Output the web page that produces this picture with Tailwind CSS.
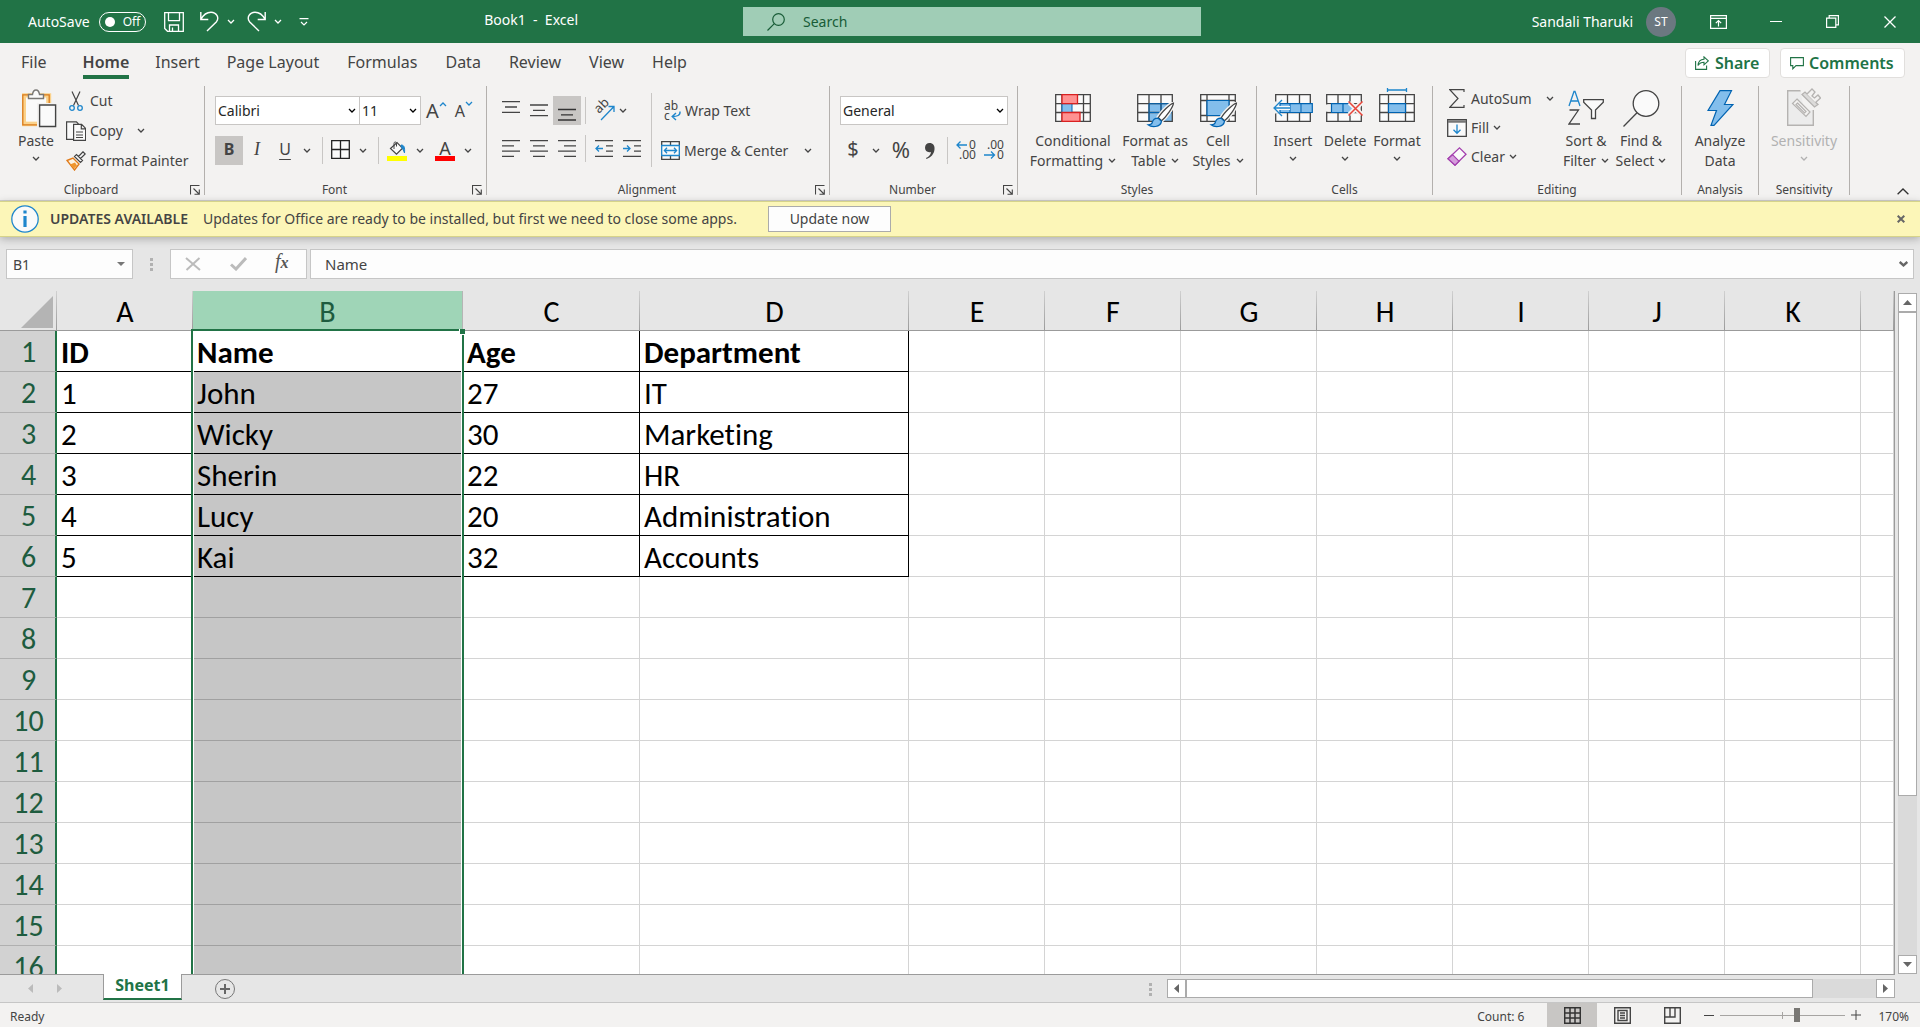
<!DOCTYPE html>
<html lang="en">
<head>
<meta charset="utf-8">
<title>Book1 - Excel</title>
<script src="https://cdn.jsdelivr.net/npm/@tailwindcss/browser@4"></script>
</head>
<body class="flex h-screen flex-col overflow-hidden bg-[#e6e6e6] font-['Noto_Sans','Open_Sans',sans-serif] text-sm text-[#444444]">

<svg class="hidden">
  <symbol id="chev" viewBox="0 0 8 6"><path d="M1 1l3 3 3-3" fill="none" stroke="currentColor" stroke-width="1.3"/></symbol>
  <symbol id="launch" viewBox="0 0 10 10"><path d="M.5 9.500V.5h9M3.500 3.500l5.500 5.500M9.300 4.500v4.800H4.500" fill="none" stroke="currentColor" stroke-width="1.100"/></symbol>
  <symbol id="brush" viewBox="0 0 28 26"><path d="M26.500 1c-3 .5-12 9.500-14.500 14l3 3c4.500-3.500 11.500-13.500 11.500-17z" fill="#fff" stroke="#f3f2f1" stroke-width="4"/><path d="M26.500 1c-3 .5-12 9.500-14.500 14l3 3c4.500-3.500 11.500-13.500 11.500-17z" fill="#fff" stroke="#444" stroke-width="1.200"/><path d="M11.500 15.500c-4 0-5 2-5.500 4.500-.5 1.500-2 2-4 2 3 2.500 12 3 13-3.500z" fill="#83beec" stroke="#0063b1" stroke-width="1.200"/></symbol>
</svg>

<header class="flex h-[43px] shrink-0 items-center bg-[#217346] text-white">
  <div class="flex min-w-0 flex-1 items-center">
    <label for="autosave" class="ml-7">AutoSave</label>
    <button id="autosave" class="ml-[9px] flex h-5 w-[47px] items-center gap-2 rounded-full border border-white pl-[5px] text-xs"><span class="size-[10px] rounded-full bg-white"></span>Off</button>
    <button aria-label="Save" class="ml-[18px]"><svg class="size-5" viewBox="0 0 20 20" fill="none" stroke="#fff" stroke-width="1.3"><path d="M.7.700h18.600v18.600H3.500L.7 16.500zM4.500.700v8h11v-8M5.500 19v-6h9v6M8.500 19v-3.500"/></svg></button>
    <button aria-label="Undo" class="ml-4"><svg class="h-[21px] w-[19px]" viewBox="0 0 19 21" fill="none" stroke="#fff" stroke-width="1.400"><path d="M.8 1v7.500h7.500M1 8.300C3.500 3.500 7 1.200 11 1.200c5.500 0 8.500 5.500 5.500 9.500L7 20"/></svg></button>
    <button aria-label="Undo options" class="ml-2"><svg class="h-[6px] w-2"><use href="#chev"/></svg></button>
    <button aria-label="Redo" class="ml-3"><svg class="h-[21px] w-[19px]" viewBox="0 0 19 21" fill="none" stroke="#fff" stroke-width="1.400"><path d="M18.200 1v7.500h-7.500M18 8.300C15.500 3.500 12 1.200 8 1.200c-5.500 0-8.500 5.500-5.500 9.500L12 20"/></svg></button>
    <button aria-label="Redo options" class="ml-2"><svg class="h-[6px] w-2"><use href="#chev"/></svg></button>
    <button aria-label="Customize toolbar" class="ml-[17px]"><svg class="h-2 w-[10px]" viewBox="0 0 10 8" fill="none" stroke="#fff" stroke-width="1.200"><path d="M.5.600h9M2 4l3 3 3-3"/></svg></button>
    <h1 class="mr-[141px] ml-auto pb-1 whitespace-pre">Book1  -  Excel</h1>
  </div>
  <label class="ml-6 flex h-[29px] w-[458px] items-center bg-[#a0cdb6] pl-6 text-[#185c37]">
    <svg class="size-[18px]" viewBox="0 0 18 18" fill="none" stroke="#185c37" stroke-width="1.200"><circle cx="11.500" cy="6.500" r="5.800"/><path d="M7.300 10.700L.5 17.500"/></svg>
    <input aria-label="Search" placeholder="Search" class="ml-[18px] w-80 bg-transparent outline-none placeholder:text-[#185c37]">
  </label>
  <div class="flex flex-1 items-center justify-end">
    <span>Sandali Tharuki</span>
    <button aria-label="Account" class="ml-[13px] flex size-[30px] items-center justify-center rounded-full bg-[#6b7880] text-xs">ST</button>
    <button aria-label="Ribbon display options" class="ml-[34px]"><svg class="h-[14px] w-[17px]" viewBox="0 0 17 14" fill="none" stroke="#fff" stroke-width="1.200"><path d="M.6.600h15.800v12.800H.6zM.6 3.400h15.800M8.500 11.500V5.500M5.800 8.200l2.700-2.700 2.700 2.700"/></svg></button>
    <button aria-label="Minimize" class="ml-[43px] h-[14px] w-3"><span class="block h-px bg-white"></span></button>
    <button aria-label="Restore" class="ml-11"><svg class="size-[13px]" viewBox="0 0 13 13" fill="none" stroke="#fff" stroke-width="1.200"><path d="M.6 3.200h9.200v9.200H.6zM3.200 3V.600h9.200v9.200H10"/></svg></button>
    <button aria-label="Close" class="mr-6 ml-[45px]"><svg class="size-3" viewBox="0 0 12 12" stroke="#fff" stroke-width="1.300"><path d="M.5.500l11 11M11.500.500l-11 11"/></svg></button>
  </div>
</header>

<div class="flex h-[43px] shrink-0 items-center bg-[#f3f2f1] text-base">
  <nav class="flex h-full flex-1 pb-1 pl-[7px] leading-[38px]">
    <a href="#" class="mr-[9px] px-[14px]">File</a>
    <a href="#" class="relative px-[13px] font-semibold">Home<span class="absolute inset-x-[13px] bottom-[3px] h-1 bg-[#217346]"></span></a>
    <a href="#" class="px-[13px]">Insert</a>
    <a href="#" class="px-[14px]">Page Layout</a>
    <a href="#" class="px-[14px]">Formulas</a>
    <a href="#" class="px-[14px]">Data</a>
    <a href="#" class="px-[14px]">Review</a>
    <a href="#" class="px-[14px]">View</a>
    <a href="#" class="px-[14px]">Help</a>
  </nav>
  <div class="mr-[15px] flex gap-[10px] pb-1 font-semibold text-[#217346]">
    <button class="flex h-[30px] w-[85px] items-center gap-[6px] rounded-sm border border-[#e1dfdd] bg-white pl-[9px] leading-5"><svg class="size-[14px]" viewBox="0 0 14 14" fill="none" stroke="#217346" stroke-width="1.100"><path d="M.6 5v8.400h11V9.500M9 .800l4.300 4L9 8.800V6.300C6 6.300 4.300 7.500 3 9.500c.3-4 2.500-6 6-6.200z"/></svg>Share</button>
    <button class="flex h-[30px] w-[125px] items-center gap-[5px] rounded-sm border border-[#e1dfdd] bg-white pl-[9px] leading-5"><svg class="size-[14px]" viewBox="0 0 14 14" fill="none" stroke="#217346" stroke-width="1.100"><path d="M.6 1.600h12.800v8H6L2.800 12.800V9.600H.6z"/></svg>Comments</button>
  </div>
</div>

<div class="flex h-[115px] shrink-0 justify-between border-b border-[#d2d0ce] bg-[#f3f2f1] leading-5">
 <div class="flex h-[109px] shrink-0">
  <section aria-label="Clipboard" class="flex w-[205px] shrink-0 flex-col border-r border-[#b3b0ad]">
    <div class="flex flex-1">
      <button class="ml-[13px] flex w-[46px] flex-col items-center self-start"><span class="flex h-[45px] items-center"><svg class="mb-[1px] ml-[6px] h-[39px] w-[35px]" viewBox="0 0 35 39" fill="none"><path d="M1.700 6.700h25v28h-25z" fill="#fff" stroke="#fbd28b" stroke-width="5"/><path d="M.8 5.800h26.400v30H.8z" stroke="#d97b1c" stroke-width="1.300"/><path d="M4 8.500h20v24H4z" fill="#fafafa"/><path d="M6.500 9.500v-4h4C11 2 12.500 1 14 1s3 1 3.500 4.500h4v4z" fill="#fafafa" stroke="#797774" stroke-width="1.400"/><path d="M15 14h20v25H15z" fill="#f3f2f1"/><path d="M17.600 16h16v21.500h-16z" fill="#fafafa" stroke="#444" stroke-width="1.400"/></svg></span>Paste<svg class="mt-[5px] h-[6px] w-2"><use href="#chev"/></svg></button>
      <div class="ml-[7px] flex flex-col">
        <button class="flex h-[30px] items-center gap-[7px]"><svg class="ml-[3px] h-5 w-[14px]" viewBox="0 0 14 20" fill="none"><path d="M3 .500l6.500 14M11 .500l-6.500 14" stroke="#444" stroke-width="1.200"/><circle cx="3" cy="17" r="2.300" stroke="#1e86cc" stroke-width="1.300"/><circle cx="11" cy="17" r="2.300" stroke="#1e86cc" stroke-width="1.300"/></svg>Cut</button>
        <div class="flex h-[30px] items-center"><button class="flex items-center gap-1"><svg class="size-5" viewBox="0 0 20 20" fill="#fafafa" stroke="#444" stroke-width="1.200"><path d="M10 18.400H.6V.800h9.800L12.500 3"/><path d="M7.600 3.400h8l4 4v12h-12zM15.300 3.600v4.200h4.200M10 11h7M10 14h7M10 16.500h7" /></svg>Copy</button><button aria-label="Copy options" class="ml-[14px]"><svg class="h-[6px] w-2"><use href="#chev"/></svg></button></div>
        <button class="flex h-[30px] items-center gap-1"><svg class="size-5" viewBox="0 0 20 20" fill="none"><path d="M1 9.500l6-2.500 6 6-4.500 6z" fill="#fdf3e3" stroke="#e07b1a" stroke-width="1.400"/><path d="M4 13.500l5-2 2 3-3 3z" fill="#f0962e"/><path d="M8.500 5.500l6 6 2-2-6-6zM12.500 5.500l4.500-4.700 2.200 2.200-4.700 4.500" fill="#fafafa" stroke="#444" stroke-width="1.200"/></svg>Format Painter</button>
      </div>
    </div>
    <div class="flex h-[10px] items-center text-xs leading-3"><span class="flex-1 pr-2 text-center">Clipboard</span><button aria-label="Clipboard settings" class="mr-1"><svg class="size-[10px]"><use href="#launch"/></svg></button></div>
  </section>

  <section aria-label="Font" class="flex w-[282px] shrink-0 flex-col border-r border-[#b3b0ad]">
    <div class="flex flex-1 flex-col gap-[11px] pt-[10px] pl-[10px]">
      <div class="flex h-[29px] items-center">
        <div class="relative"><select aria-label="Font name" class="h-[29px] w-[145px] appearance-none border border-[#c8c6c4] bg-white pl-[2px] text-[#262626]"><option>Calibri</option></select><svg class="pointer-events-none absolute top-3 right-1 h-[6px] w-2 text-black"><use href="#chev"/></svg></div>
        <div class="relative"><select aria-label="Font size" class="h-[29px] w-[61px] appearance-none border border-l-0 border-[#c8c6c4] bg-white pl-[2px] text-[#262626]"><option>11</option></select><svg class="pointer-events-none absolute top-3 right-1 h-[6px] w-2 text-black"><use href="#chev"/></svg></div>
        <button aria-label="Increase font size" class="ml-[5px] flex items-start text-xl leading-6">A<svg class="mt-[2px] h-[6px] w-2 rotate-180 text-[#1e86cc]"><use href="#chev"/></svg></button>
        <button aria-label="Decrease font size" class="ml-2 flex items-start text-base leading-6">A<svg class="mt-[2px] h-[6px] w-2 text-[#1e86cc]"><use href="#chev"/></svg></button>
      </div>
      <div class="flex h-[29px] items-center">
        <button class="h-[29px] w-7 bg-[#c8c6c4] pb-1 text-base leading-6 font-bold">B</button>
        <button class="h-[29px] w-7 pb-1 font-['Liberation_Serif',serif] text-lg leading-6 italic">I</button>
        <button class="h-[29px] w-7 pb-1 text-base leading-6 underline underline-offset-4">U</button>
        <button aria-label="Underline options" class="ml-1"><svg class="h-[6px] w-2"><use href="#chev"/></svg></button>
        <span class="ml-[11px] h-[27px] w-px bg-[#c8c6c4]"></span>
        <button aria-label="Borders" class="ml-2"><svg class="mb-[2px] size-[19px]" viewBox="0 0 19 19" fill="#fafafa" stroke="#222" stroke-width="1.300"><path d="M.7.700h17.600v17.600H.7zM9.500 1v17M1 9.500h17"/></svg></button>
        <button aria-label="Border options" class="ml-[9px]"><svg class="h-[6px] w-2"><use href="#chev"/></svg></button>
        <span class="ml-[11px] h-[27px] w-px bg-[#c8c6c4]"></span>
        <button aria-label="Fill color" class="ml-2"><svg class="h-5 w-5" viewBox="0 0 20 20" fill="none"><path d="M3.500 7.500L10 1.500l5.500 5.700-6 6z" fill="#fafafa" stroke="#444" stroke-width="1.200"/><path d="M7 8V2.500C7 .5 9.500.5 9.500 2.500v3" stroke="#444"/><path d="M14 4c3 0 4 2 3.500 8-1-3-2-4.500-3-5z" fill="#1e86cc" stroke="#1e86cc"/><path d="M0 15h20v5H0z" fill="#ff0"/></svg></button>
        <button aria-label="Fill color options" class="ml-[9px]"><svg class="h-[6px] w-2"><use href="#chev"/></svg></button>
        <button aria-label="Font color" class="ml-[11px] flex w-5 flex-col items-center text-lg leading-[15px]">A<span class="h-[5px] w-full bg-[#ff0000]"></span></button>
        <button aria-label="Font color options" class="ml-[9px]"><svg class="h-[6px] w-2"><use href="#chev"/></svg></button>
      </div>
    </div>
    <div class="flex h-[10px] items-center text-xs leading-3"><span class="flex-1 pr-2 text-center">Font</span><button aria-label="Font settings" class="mr-1"><svg class="size-[10px]"><use href="#launch"/></svg></button></div>
  </section>

  <section aria-label="Alignment" class="flex w-[343px] shrink-0 flex-col border-r border-[#b3b0ad]">
    <div class="flex flex-1">
      <div class="flex w-[164px] flex-col gap-[11px] pt-[10px] pl-[10px]">
        <div class="flex h-[29px] items-center">
          <button aria-label="Top align" class="flex h-[29px] w-7 items-center justify-center"><svg class="h-5 w-[18px]" viewBox="0 0 18 20" stroke="#444" stroke-width="1.300"><path d="M0 .700h18M3 6h12M0 11.300h18"/></svg></button>
          <button aria-label="Middle align" class="flex h-[29px] w-7 items-center justify-center"><svg class="h-5 w-[18px]" viewBox="0 0 18 20" stroke="#444" stroke-width="1.300"><path d="M0 4h18M3 9.300h12M0 14.600h18"/></svg></button>
          <button aria-label="Bottom align" class="flex h-[29px] w-7 items-center justify-center bg-[#c8c6c4]"><svg class="h-5 w-[18px]" viewBox="0 0 18 20" stroke="#333" stroke-width="1.300"><path d="M0 8.500h18M3 13.800h12M0 19h18"/></svg></button>
          <span class="ml-1 h-[27px] w-px bg-[#c8c6c4]"></span>
          <button aria-label="Orientation" class="ml-2"><svg class="h-[21px] w-[21px] overflow-visible" viewBox="0 0 21 21" fill="none"><text transform="translate(5 14) rotate(-45)" font-size="13" fill="#444" font-family="Noto Sans, sans-serif">ab</text><path d="M7 20L20 6.500M14.500 6.500H20V12" stroke="#1e86cc" stroke-width="1.300"/></svg></button>
          <button aria-label="Orientation options" class="ml-1"><svg class="h-[6px] w-2"><use href="#chev"/></svg></button>
        </div>
        <div class="flex h-[29px] items-center pb-1">
          <button aria-label="Align left" class="flex w-7 justify-center"><svg class="h-[17px] w-[18px]" viewBox="0 0 18 17" stroke="#444" stroke-width="1.300"><path d="M0 .700h18M0 5.900h12M0 11.100h18M0 16.300h12"/></svg></button>
          <button aria-label="Center" class="flex w-7 justify-center"><svg class="h-[17px] w-[18px]" viewBox="0 0 18 17" stroke="#444" stroke-width="1.300"><path d="M0 .700h18M3 5.900h12M0 11.100h18M3 16.300h12"/></svg></button>
          <button aria-label="Align right" class="flex w-7 justify-center"><svg class="h-[17px] w-[18px]" viewBox="0 0 18 17" stroke="#444" stroke-width="1.300"><path d="M0 .700h18M6 5.900h12M0 11.100h18M6 16.300h12"/></svg></button>
          <span class="ml-1 h-[27px] w-px bg-[#c8c6c4]"></span>
          <button aria-label="Decrease indent" class="ml-[9px]"><svg class="h-[17px] w-[18px]" viewBox="0 0 18 17" fill="none" stroke="#444" stroke-width="1.300"><path d="M0 .700h18M11 5.900h7M11 11.100h7M0 16.300h18"/><path d="M8 8.500H1M4 5.500l-3 3 3 3" stroke="#1e86cc"/></svg></button>
          <button aria-label="Increase indent" class="ml-[10px]"><svg class="h-[17px] w-[18px]" viewBox="0 0 18 17" fill="none" stroke="#444" stroke-width="1.300"><path d="M0 .700h18M11 5.900h7M11 11.100h7M0 16.300h18"/><path d="M0 8.500h7M4 5.500l3 3-3 3" stroke="#1e86cc"/></svg></button>
        </div>
      </div>
      <div class="mt-[7px] flex h-[74px] flex-col gap-[11px] border-l border-[#c8c6c4] pt-[3px] pl-[9px]">
        <button class="flex h-[29px] items-center gap-1 pl-[3px]"><svg class="h-5 w-[17px] overflow-visible" viewBox="0 0 17 20" fill="none"><text x="0" y="9" font-size="12" fill="#444" font-family="Noto Sans, sans-serif">ab<tspan x="0" y="19">c</tspan></text><path d="M16 10.500c.5 4-3 5-7.500 5M12 12l-3.800 3.500L12 19" stroke="#1e86cc" stroke-width="1.400"/></svg>Wrap Text</button>
        <div class="flex h-[29px] items-center"><button class="flex items-center gap-1"><svg class="size-[19px]" viewBox="0 0 19 19" fill="#fafafa"><path d="M.7.700h17.600v17.600H.7zM9.500 1v17" stroke="#444" stroke-width="1.300"/><path d="M.7 4.500h17.600v10H.7z" stroke="#1e86cc" stroke-width="1.300"/><path d="M3.500 9.500h12M6 6.800L3.400 9.500 6 12.200M13 6.800l2.600 2.700-2.600 2.700" fill="none" stroke="#1e86cc" stroke-width="1.300"/></svg>Merge &amp; Center</button><button aria-label="Merge options" class="ml-4"><svg class="h-[6px] w-2"><use href="#chev"/></svg></button></div>
      </div>
    </div>
    <div class="flex h-[10px] items-center text-xs leading-3"><span class="flex-1 pr-2 text-center">Alignment</span><button aria-label="Alignment settings" class="mr-1"><svg class="size-[10px]"><use href="#launch"/></svg></button></div>
  </section>

  <section aria-label="Number" class="flex w-[188px] shrink-0 flex-col border-r border-[#b3b0ad]">
    <div class="flex flex-1 flex-col gap-[11px] pt-[10px] pl-[10px]">
      <div class="relative w-[168px]"><select aria-label="Number format" class="h-[29px] w-full appearance-none border border-[#c8c6c4] bg-white pl-[2px] text-[#262626]"><option>General</option></select><svg class="pointer-events-none absolute top-3 right-1 h-[6px] w-2 text-black"><use href="#chev"/></svg></div>
      <div class="flex h-[29px] items-center">
        <button aria-label="Accounting format" class="ml-[7px] w-3 pb-1 text-xl leading-6">$</button>
        <button aria-label="Accounting options" class="ml-[13px]"><svg class="h-[6px] w-2"><use href="#chev"/></svg></button>
        <button aria-label="Percent" class="ml-[11px] w-5 pb-1 text-[22px] leading-6">%</button>
        <button aria-label="Comma style" class="ml-[14px]"><svg class="h-4 w-[10px]" viewBox="0 0 10 16" fill="#444"><path d="M4.500 0C8 0 10 2.500 9.500 6.500 9 11 6 14.500 1.500 16l-.5-1c3-1.300 4.700-3.300 5-6C2.500 10 0 7.800 0 4.800 0 2 2 0 4.500 0z"/></svg></button>
        <span class="ml-3 h-[27px] w-px bg-[#c8c6c4]"></span>
        <button aria-label="Increase decimal" class="ml-2"><svg class="mb-[2px] h-[20px] w-5 overflow-visible" viewBox="0 0 20 20" fill="none"><text font-size="12" fill="#444" font-family="Noto Sans, sans-serif" x="13" y="9">0<tspan x="3" y="19">.00</tspan></text><path d="M11 5H1M4.500 1.500L1 5l3.500 3.500" stroke="#1e86cc" stroke-width="1.300"/></svg></button>
        <button aria-label="Decrease decimal" class="ml-2"><svg class="mb-[2px] h-[20px] w-5 overflow-visible" viewBox="0 0 20 20" fill="none"><text font-size="12" fill="#444" font-family="Noto Sans, sans-serif" x="3" y="9">.00<tspan x="13" y="19">0</tspan></text><path d="M0 15h10M7 11.500l3.500 3.500L7 18.500" stroke="#1e86cc" stroke-width="1.300"/></svg></button>
      </div>
    </div>
    <div class="flex h-[10px] items-center text-xs leading-3"><span class="flex-1 pr-2 text-center">Number</span><button aria-label="Number settings" class="mr-1"><svg class="size-[10px]"><use href="#launch"/></svg></button></div>
  </section>

  <section aria-label="Styles" class="flex w-[239px] shrink-0 flex-col border-r border-[#b3b0ad]">
    <div class="flex flex-1 items-start pl-[8px]">
      <button class="flex w-[94px] flex-col items-center"><span class="h-[45px] pt-2"><svg class="h-7 w-9" viewBox="0 0 36 28"><path d="M.7.700h34.600v26.600H.7zM7 1v26M28.500 1v26M1 9.700h34M1 18.500h34" fill="#fafafa" stroke="#444" stroke-width="1.300"/><path d="M7 9.700h10v8.800H7z" fill="#83beec" stroke="#0063b1"/><path d="M7 .700h15.500v9H7zM7 18.500h18v8.800H7z" fill="#ff9191" stroke="#d92121" stroke-width="1.300"/></svg></span>Conditional<span class="flex items-center gap-[5px]">Formatting<svg class="h-[6px] w-2"><use href="#chev"/></svg></span></button>
      <button class="flex w-[70px] flex-col items-center"><span class="relative h-[45px] pt-2"><svg class="h-7 w-9" viewBox="0 0 36 28"><path d="M.7.700h34.600v26.600H.7z" fill="#fafafa"/><path d="M12 9.700h23.300v17.600H12z" fill="#83beec"/><path d="M.7.700h34.600v26.600H.7zM12 1v26M24 1v26M1 9.700h34M1 18.500h34" fill="none" stroke="#444" stroke-width="1.300"/><path d="M12 9.700h23M12 9.700v17.500M24 9.700v17.500M12 18.500h23" stroke="#0063b1"/></svg><svg class="absolute top-4 left-[9px] h-[27px] w-[29px]"><use href="#brush"/></svg></span>Format as<span class="flex items-center gap-[5px]">Table<svg class="h-[6px] w-2"><use href="#chev"/></svg></span></button>
      <button class="flex w-[56px] flex-col items-center"><span class="relative h-[45px] pt-2"><svg class="h-7 w-9" viewBox="0 0 36 28"><path d="M.7.700h34.600v26.600H.7zM7 1v26M29 1v26M1 6.500h34M1 21.500h34" fill="#fafafa" stroke="#444" stroke-width="1.300"/><path d="M7 6.500h22v15H7z" fill="#83beec" stroke="#0063b1" stroke-width="1.200"/></svg><svg class="absolute top-4 left-[9px] h-[27px] w-[29px]"><use href="#brush"/></svg></span>Cell<span class="flex items-center gap-[5px]">Styles<svg class="h-[6px] w-2"><use href="#chev"/></svg></span></button>
    </div>
    <div class="h-[10px] text-center text-xs leading-[10px]">Styles</div>
  </section>

  <section aria-label="Cells" class="flex w-[176px] shrink-0 flex-col border-r border-[#b3b0ad]">
    <div class="flex flex-1 items-start pl-[10px]">
      <button class="flex w-[52px] flex-col items-center"><span class="h-[45px] pt-2"><svg class="h-7 w-10" viewBox="0 0 40 28" fill="none"><path d="M2.700.700h34.600v26.600H2.700zM14.500 1v26M26.500 1v26M3 9.700h34M3 18.500h34" fill="#fafafa" stroke="#444" stroke-width="1.300"/><path d="M0 7.500h9v12H0z" fill="#f3f2f1"/><path d="M7 9.700h32.300v8.800H7z" fill="#83beec" stroke="#0063b1" stroke-width="1.200"/><path d="M17 10v8M28 10v8" stroke="#0063b1"/><path d="M17 14H2" stroke="#fafafa" stroke-width="4"/><path d="M17 14H1.500M9 6L1 14l8 8" stroke="#1e86cc" stroke-width="1.300"/></svg></span>Insert<svg class="mt-[5px] h-[6px] w-2"><use href="#chev"/></svg></button>
      <button class="flex w-[52px] flex-col items-center"><span class="h-[45px] pt-2"><svg class="h-7 w-[38px]" viewBox="0 0 38 28" fill="none"><path d="M.7.700h34.600v26.600H.7zM12 1v26M24 1v26M1 9.700h34M1 18.500h34" fill="#fafafa" stroke="#444" stroke-width="1.300"/><path d="M0 10.500h6v7.200H0z" fill="#f3f2f1"/><path d="M5.500 9.700h18l4 4.400-4 4.400h-18zM17 10v8" fill="#83beec" stroke="#0063b1" stroke-width="1.200"/><path d="M23.500 8.500l12 12M35.500 8.500l-12 12" stroke="#f3f2f1" stroke-width="5"/><path d="M22.500 7.500l14 14M36.500 7.500l-14 14" stroke="#e8443a" stroke-width="1.500"/></svg></span>Delete<svg class="mt-[5px] h-[6px] w-2"><use href="#chev"/></svg></button>
      <button class="flex w-[52px] flex-col items-center"><span class="h-[45px] pt-[2px]"><svg class="h-[34px] w-9" viewBox="0 0 36 34" fill="none"><path d="M.7 6.700h34.600v26.600H.7zM9.500 7v26M26.500 7v26M1 15.700h34M1 24.500h34" fill="#fafafa" stroke="#444" stroke-width="1.300"/><path d="M9.500 15.700h17v8.800h-17z" fill="#83beec" stroke="#0063b1" stroke-width="1.200"/><path d="M8.500 2h19M8.500 0v4M27.500 0v4" stroke="#1e86cc" stroke-width="1.300"/></svg></span>Format<svg class="mt-[5px] h-[6px] w-2"><use href="#chev"/></svg></button>
    </div>
    <div class="h-[10px] text-center text-xs leading-[10px]">Cells</div>
  </section>

  <section aria-label="Editing" class="flex w-[249px] shrink-0 flex-col border-r border-[#b3b0ad]">
    <div class="flex flex-1 items-start pl-[14px]">
      <div class="flex w-[112px] flex-col">
        <div class="flex h-[25px] items-center"><button class="flex items-center gap-[6px]"><svg class="ml-[2px] h-[19px] w-4" viewBox="0 0 16 19" fill="none" stroke="#444" stroke-width="1.200"><path d="M15 3V.700H.8L9 9.500.8 18.300H15V16"/></svg>AutoSum</button><button aria-label="AutoSum options" class="ml-[14px]"><svg class="h-[6px] w-2"><use href="#chev"/></svg></button></div>
        <button class="flex h-[33px] items-center gap-[4px]"><svg class="h-[18px] w-5" viewBox="0 0 20 18" fill="none"><path d="M.7.700h18.600v16.600H.7z" fill="#fafafa" stroke="#444" stroke-width="1.300"/><path d="M1 2.500h18" stroke="#777" stroke-width="2.500"/><path d="M10 5.500V14M6.500 10.800L10 14.300l3.500-3.500" stroke="#1e86cc" stroke-width="1.300"/></svg>Fill<svg class="h-[6px] w-2"><use href="#chev"/></svg></button>
        <button class="flex h-[25px] items-center gap-[4px]"><svg class="h-[19px] w-5" viewBox="0 0 20 19"><path d="M12.500.900L19 7.300 8 18.200 1 11.800z" fill="#fafafa" stroke="#a33fae" stroke-width="1.300"/><path d="M5.500 7.700l6.500 6.500-4 4-7-6.400z" fill="#d59ddc" stroke="#a33fae" stroke-width="1.200"/></svg>Clear<svg class="h-[6px] w-2"><use href="#chev"/></svg></button>
      </div>
      <button class="flex w-[54px] flex-col items-center"><span class="h-[45px] pt-1"><svg class="h-9 w-9" viewBox="0 0 36 36" fill="none"><path d="M1 16L6 1.500h1L12 16M3 11h7.500" stroke="#1e86cc" stroke-width="1.300"/><path d="M1.500 20h9L1 34h11" stroke="#444" stroke-width="1.300"/><path d="M15.700 9.700h19.600v2.500L27.500 20v8.500h-4V20l-7.800-7.800z" fill="#fafafa" stroke="#444" stroke-width="1.300"/></svg></span>Sort &amp;<span class="flex items-center gap-[5px]">Filter<svg class="h-[6px] w-2"><use href="#chev"/></svg></span></button>
      <button class="flex w-[56px] flex-col items-center"><span class="h-[45px] pt-1"><svg class="h-[37px] w-[37px]" viewBox="0 0 37 37" fill="none" stroke="#444" stroke-width="1.300"><circle cx="23" cy="13.500" r="12.800" fill="#fafafa"/><path d="M14 22.700L.5 36.500"/></svg></span>Find &amp;<span class="flex items-center gap-1">Select<svg class="h-[6px] w-2"><use href="#chev"/></svg></span></button>
    </div>
    <div class="h-[10px] text-center text-xs leading-[10px]">Editing</div>
  </section>

  <section aria-label="Analysis" class="flex w-[77px] shrink-0 flex-col border-r border-[#b3b0ad]">
    <button class="flex flex-1 flex-col items-center"><span class="h-[45px] pt-1"><svg class="h-9 w-[27px]" viewBox="0 0 27 36"><path d="M13 .700h11.500L17.500 14.500H26L7 35.300H4L9.500 20.500H1z" fill="#83beec" stroke="#0063b1" stroke-width="1.200"/></svg></span>Analyze<span>Data</span></button>
    <div class="h-[10px] text-center text-xs leading-[10px]">Analysis</div>
  </section>

  <section aria-label="Sensitivity" class="flex w-[91px] shrink-0 flex-col border-r border-[#b3b0ad]">
    <button disabled class="flex flex-1 flex-col items-center text-[#b1b1b1]"><span class="h-[45px] pt-[2px]"><svg class="h-[38px] w-[34px]" viewBox="0 0 34 38" fill="none" stroke="#b5b3b1"><path d="M.7 2.700h25.600v34.600H.7z" fill="#ececec" stroke-width="1.400"/><path d="M13 0h21v22H17z" fill="#f3f2f1" stroke="none"/><path d="M10 11l13 13-4 4.500L5.500 15.500z" fill="#f3f2f1" stroke-width="1.200"/><path d="M10.500 15l8.500 8.500-1.500 1.500L9 16.500z" stroke-width="1.200"/><path d="M15 6.500l3-2.500L31 16.500l-3.500 2.500z" fill="#dcdbda" stroke-width="1.300"/><path d="M20 6l5-5 3 3-3 4 2.500 2 3.500-3 2.500 3-5 4.500" fill="#f3f2f1" stroke-width="1.300"/></svg></span>Sensitivity<svg class="mt-[5px] h-[6px] w-2"><use href="#chev"/></svg></button>
    <div class="h-[10px] text-center text-xs leading-[10px]">Sensitivity</div>
  </section>
 </div>
 <button aria-label="Collapse ribbon" class="mr-[11px] self-end pb-[5px]"><svg class="h-[7px] w-3" viewBox="0 0 12 7" fill="none" stroke="#333" stroke-width="1.300"><path d="M.6 6.300L6 1l5.400 5.300"/></svg></button>
</div>

<div role="status" class="relative z-10 flex h-[36px] shrink-0 items-center border-y border-[#d6d38a] bg-[#fcf6b8] shadow-[0_2px_8px_rgba(0,0,0,0.25)]">
  <svg class="ml-[11px] size-7" viewBox="0 0 28 28"><circle cx="14" cy="14" r="13.200" fill="#fafafa" stroke="#1e86cc" stroke-width="1.300"/><path d="M14 5.500v3M14 11v11" stroke="#1e86cc" stroke-width="3.200"/></svg>
  <span class="ml-[11px] w-[141px] font-semibold whitespace-nowrap">UPDATES AVAILABLE</span>
  <span class="ml-3 w-[541px] whitespace-nowrap">Updates for Office are ready to be installed, but first we need to close some apps.</span>
  <button class="ml-6 h-[26px] w-[123px] border border-[#ababab] bg-[#fdfdfd]">Update now</button>
  <button aria-label="Dismiss" class="mr-[15px] ml-auto"><svg class="size-2" viewBox="0 0 8 8" stroke="#666" stroke-width="2"><path d="M.7.700l6.600 6.600M7.300.700L.7 7.300"/></svg></button>
</div>

<div class="flex h-[54px] shrink-0 items-center pr-[6px] pl-[6px]">
  <div class="relative"><input aria-label="Name box" value="B1" class="h-[30px] w-[127px] border border-[#c6c6c6] bg-[#fdfdfd] pl-[6px]"><svg class="pointer-events-none absolute top-[13px] right-2 h-1 w-2" viewBox="0 0 8 4"><path d="M0 0h8L4 4z" fill="#777"/></svg></div>
  <span class="ml-[17px] flex w-[3px] flex-col gap-[2px]"><i class="size-[3px] bg-[#b1b1b1]"></i><i class="size-[3px] bg-[#b1b1b1]"></i><i class="size-[3px] bg-[#b1b1b1]"></i></span>
  <div class="ml-[17px] flex h-[30px] w-[137px] items-center border border-[#c6c6c6] bg-[#fdfdfd] pl-[14px]">
    <button aria-label="Cancel"><svg class="h-[14px] w-4" viewBox="0 0 16 14" stroke="#bbb" stroke-width="2"><path d="M1 1l14 12M14.500 1L1.500 13"/></svg></button>
    <button aria-label="Enter" class="ml-[29px]"><svg class="h-[14px] w-[17px]" viewBox="0 0 17 14" fill="none" stroke="#bbb" stroke-width="3"><path d="M1 7.500l5 4.500L16 1"/></svg></button>
    <button aria-label="Insert function" class="ml-[28px] pb-1 font-['Liberation_Serif',serif] text-xl leading-6 italic text-[#555]">f<span class="text-base font-bold">x</span></button>
  </div>
  <div class="relative ml-[3px] flex-1"><input aria-label="Formula bar" value="Name" class="h-[30px] w-full border border-[#c6c6c6] bg-[#fdfdfd] pl-[14px] text-[15px]"><svg class="pointer-events-none absolute top-3 right-[6px] h-[6px] w-[9px]" viewBox="0 0 9 6" fill="none" stroke="#666" stroke-width="2.400"><path d="M.7.900l3.800 3.500L8.300.900"/></svg></div>
</div>

<main class="flex min-h-0 flex-1">
  <div class="relative min-w-0 flex-1 overflow-hidden border-r border-[#9b9b9b]">
    <table class="w-full table-fixed border-separate border-spacing-0 font-['Carlito','Lato',sans-serif] text-[30px] leading-9 text-black [font-variant-ligatures:none]">
      <colgroup><col class="w-[57px]"><col class="w-[136px]"><col class="w-[270px]"><col class="w-[177px]"><col class="w-[269px]"><col class="w-[136px]"><col class="w-[136px]"><col class="w-[136px]"><col class="w-[136px]"><col class="w-[136px]"><col class="w-[136px]"><col class="w-[136px]"><col></colgroup>
      <thead><tr id="cols"></tr></thead>
      <tbody id="rows"></tbody>
    </table>
    <div class="pointer-events-none absolute top-[38px] -bottom-1 left-[191px] w-[273px] border-2 border-[#217346] shadow-[inset_0_0_0_1px_#ffffff]"><span class="absolute -top-[2px] -right-[3px] size-[6px] border-b border-l border-white bg-[#217346]"></span></div>
  </div>
  <div class="mx-[3px] mt-[2px] flex w-[19px] flex-col bg-[#dadada]">
    <button aria-label="Scroll up" class="flex h-[19px] shrink-0 items-center justify-center border border-[#ababab] bg-white"><svg class="h-[5px] w-[9px]" viewBox="0 0 9 5"><path d="M0 5h9L4.500 0z" fill="#666"/></svg></button>
    <div class="h-[71%] border border-[#ababab] bg-white"></div>
    <button aria-label="Scroll down" class="mt-auto flex h-[19px] shrink-0 items-center justify-center border border-[#ababab] bg-white"><svg class="h-[5px] w-[9px]" viewBox="0 0 9 5"><path d="M0 0h9L4.500 5z" fill="#666"/></svg></button>
  </div>
</main>

<div class="flex h-[29px] shrink-0 border-b border-[#c6c6c6] pr-[25px]">
  <div class="flex w-[103px] items-start gap-6 border-t border-[#9b9b9b] pt-[9px] pl-7">
    <button aria-label="Previous sheet"><svg class="h-[9px] w-[5px]" viewBox="0 0 5 9"><path d="M5 0v9L0 4.500z" fill="#bbb"/></svg></button>
    <button aria-label="Next sheet"><svg class="h-[9px] w-[5px]" viewBox="0 0 5 9"><path d="M0 0v9l5-4.500z" fill="#bbb"/></svg></button>
  </div>
  <button class="h-[26px] w-[79px] border-x border-b-2 border-x-[#9b9b9b] border-b-[#217346] bg-white pb-[2px] text-base leading-5 font-bold text-[#217346]">Sheet1</button>
  <div class="flex min-w-0 flex-1 border-t border-[#9b9b9b] pt-1">
    <button aria-label="New sheet" class="ml-[33px] flex size-5 items-center justify-center rounded-full border border-[#777]"><svg class="size-[10px]" viewBox="0 0 10 10" stroke="#666" stroke-width="2"><path d="M5 0v10M0 5h10"/></svg></button>
    <span class="mt-1 mr-[15px] ml-auto flex w-[3px] flex-col gap-[2px]"><i class="size-[3px] bg-[#b1b1b1]"></i><i class="size-[3px] bg-[#b1b1b1]"></i><i class="size-[3px] bg-[#b1b1b1]"></i></span>
    <div class="flex h-[19px] w-[728px] bg-[#dadada]">
      <button aria-label="Scroll left" class="flex w-[19px] items-center justify-center border border-[#ababab] bg-white"><svg class="h-[9px] w-[5px]" viewBox="0 0 5 9"><path d="M5 0v9L0 4.500z" fill="#666"/></svg></button>
      <div class="w-[627px] border border-[#ababab] bg-white"></div>
      <button aria-label="Scroll right" class="ml-auto flex w-[19px] items-center justify-center border border-[#ababab] bg-white"><svg class="h-[9px] w-[5px]" viewBox="0 0 5 9"><path d="M0 0v9l5-4.500z" fill="#666"/></svg></button>
    </div>
  </div>
</div>

<footer class="flex h-6 shrink-0 items-center bg-[#f3f2f1] text-xs">
  <span class="ml-[10px] pt-1">Ready</span>
  <span class="ml-auto pt-1">Count: 6</span>
  <button aria-label="Normal view" class="ml-[23px] flex h-full w-[50px] items-center justify-center bg-[#c8c6c4]"><svg class="size-[17px]" viewBox="0 0 17 17" fill="none" stroke="#333" stroke-width="1.500"><path d="M.7.700h15.600v15.600H.7zM6 1v15M11 1v15M1 6h15M1 11h15"/></svg></button>
  <button aria-label="Page layout view" class="flex h-full w-[50px] items-center justify-center"><svg class="size-[17px]" viewBox="0 0 17 17" fill="none" stroke="#444" stroke-width="1.400"><path d="M.7.700h15.600v15.600H.7zM4 3.500h9v10H4zM6 6h5M6 8.500h5M6 11h5"/></svg></button>
  <button aria-label="Page break preview" class="flex h-full w-[50px] items-center justify-center"><svg class="size-[17px]" viewBox="0 0 17 17" fill="none" stroke="#444" stroke-width="1.400"><path d="M.7.700h15.600v15.600H.7zM1 10h10V1M6 1v9"/></svg></button>
  <button aria-label="Zoom out" class="ml-[7px] flex h-full w-[10px] items-center"><span class="h-px w-full bg-[#444]"></span></button>
  <div class="relative ml-[6px] flex h-4 items-center"><input type="range" aria-label="Zoom" min="0" max="100" value="62" class="h-px w-[125px] appearance-none bg-[#a6a4a2] [&::-webkit-slider-thumb]:h-[14px] [&::-webkit-slider-thumb]:w-[6px] [&::-webkit-slider-thumb]:appearance-none [&::-webkit-slider-thumb]:bg-[#797774]"><span class="absolute top-[5px] left-[62px] h-[7px] w-px bg-[#a6a4a2]"></span></div>
  <button aria-label="Zoom in" class="ml-[6px]"><svg class="size-[10px]" viewBox="0 0 10 10" stroke="#444"><path d="M5 0v10M0 5h10"/></svg></button>
  <button class="mr-[11px] ml-[17px] pt-1">170%</button>
</footer>

<script>
const data = [
  ['ID', 'Name', 'Age', 'Department'],
  ['1', 'John', '27', 'IT'],
  ['2', 'Wicky', '30', 'Marketing'],
  ['3', 'Sherin', '22', 'HR'],
  ['4', 'Lucy', '20', 'Administration'],
  ['5', 'Kai', '32', 'Accounts']
];
const letters = 'ABCDEFGHIJK'.split('').concat('');
const head = 'h-10 border-b border-b-[#9b9b9b] p-0 pt-[2px] text-center font-normal bg-linear-to-b from-[#d0d0d0] to-[#9b9b9b] bg-[length:1px_100%] bg-right bg-no-repeat';
let headCells = `<td class="${head}"><svg class="ml-[21px] h-8 w-8" viewBox="0 0 32 32"><path d="M32 0v32H0z" fill="#b4b4b4"/></svg></td>`;
letters.forEach(l => {
  headCells += l === 'B'
    ? '<th scope="col" class="h-10 border-r border-b border-[#9b9b9b] border-r-[#b5b5b5] bg-[#9fd5b7] p-0 pt-[2px] text-center font-normal text-[#1e5c3f]">B</th>'
    : `<th scope="col" class="${head}">${l}</th>`;
});
document.getElementById('cols').innerHTML = headCells;
let body = '';
for (let r = 0; r < 16; r++) {
  body += `<tr><th scope="row" class="h-[41px] border-r-2 border-b border-r-[#217346] border-b-[#b0b0b0] bg-[#d2d2d2] p-0 pt-[2px] pl-[2px] text-center font-normal text-[#1e5c3f]">${r + 1}</th>`;
  letters.forEach((l, c) => {
    const filled = r < 6 && c < 4;
    let cls = 'h-[41px] border-r border-b p-0 pt-[2px] pl-1 text-left text-[31px] whitespace-nowrap ';
    cls += filled ? 'border-black ' : c === 1 ? 'border-[#a0a0a0] ' : 'border-[#d4d4d4] ';
    cls += c === 1 && r > 0 ? 'bg-[#c6c6c6] ' : 'bg-white ';
    cls += r === 0 ? 'font-bold' : 'font-normal';
    body += `<td class="${cls}">${filled ? data[r][c] : ''}</td>`;
  });
  body += '</tr>';
}
document.getElementById('rows').innerHTML = body;
</script>
</body>
</html>
